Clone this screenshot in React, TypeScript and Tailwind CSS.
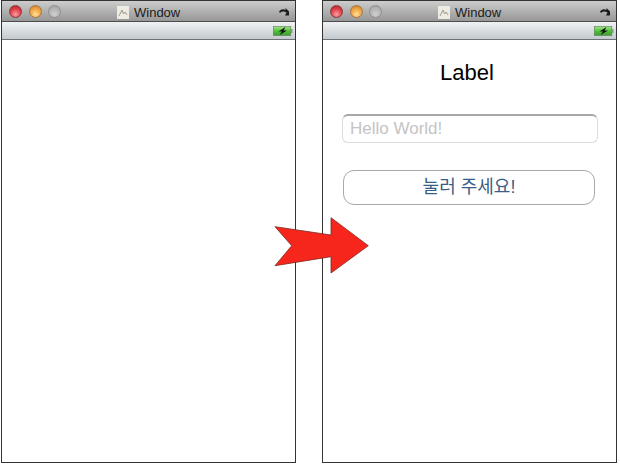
const font = { sans: "font-['Liberation_Sans','Noto_Sans_CJK_KR',sans-serif]" }

function TrafficLight({ color }: { color: string }) {
  const fills: Record<string, string> = {
    red: "bg-[radial-gradient(circle_at_50%_75%,#f7a0a2_0%,#e2444c_50%,#a8222a_100%)] border-[#8c3a3e]",
    yellow: "bg-[radial-gradient(circle_at_50%_75%,#fde09a_0%,#f2a848_50%,#c47a2c_100%)] border-[#a5793f]",
    gray: "bg-[radial-gradient(circle_at_50%_75%,#cfcfcf_0%,#b5b5b5_55%,#9c9c9c_100%)] border-[#8f8f8f]",
  }
  return <div className={`h-[13px] w-[13px] rounded-full border ${fills[color]}`} />
}

function TitleBar() {
  return (
    <div className="relative flex h-[21px] shrink-0 items-center border-b border-[#4c4c4c] bg-gradient-to-b from-[#cdcdcd] to-[#979797] pl-[7px]">
      <div className="flex gap-[6.5px]">
        <TrafficLight color="red" />
        <TrafficLight color="yellow" />
        <TrafficLight color="gray" />
      </div>
      <div className="absolute left-[115px] top-[5px] flex items-center gap-[5px]">
        <svg width="12" height="13" viewBox="0 0 12 13">
          <rect width="12" height="13" fill="#eeeae4" />
          <path d="M2 10 L5 4 L6.5 8 L8 6 L10 9" fill="none" stroke="#a39a8e" strokeWidth="1" />
        </svg>
        <span className={`${font.sans} text-[13px] leading-none text-[#1c1c1c]`}>Window</span>
      </div>
      <svg className="absolute right-[6px] top-[7px]" width="10" height="8" viewBox="0 0 10 8">
        <path d="M0 3.5 Q3 0 6.5 2 L6.5 0 L10 3.5 L10 7.5 L6 7.5 L7.5 4.5 Q3.5 2.5 1 5 Z" fill="#1c1c1c" />
      </svg>
    </div>
  )
}

function StatusBar() {
  return (
    <div className="flex h-[18px] shrink-0 items-center justify-end border-b border-[#6e7275] bg-gradient-to-b from-[#f0f3f4] to-[#c3c9cd] pr-[2px]">
      <svg width="20" height="10" viewBox="0 0 20 10">
        <defs>
          <linearGradient id="charge" x1="0" y1="0" x2="0" y2="1">
            <stop offset="0" stopColor="#a5e58a" />
            <stop offset="0.5" stopColor="#4fc23a" />
            <stop offset="1" stopColor="#3f9a30" />
          </linearGradient>
        </defs>
        <rect x="0.3" y="0.5" width="17.5" height="9" fill="url(#charge)" stroke="#5d7d55" strokeWidth="0.6" />
        <rect x="18" y="3" width="1.5" height="4" fill="#8a9a88" />
        <path d="M12.5 1 L5.5 5.5 L9 5.5 L6.5 9 L14 4.5 L10.5 4.5 Z" fill="#111" />
      </svg>
    </div>
  )
}

function Window({ children }: { children?: React.ReactNode }) {
  return (
    <div className="flex h-[463px] w-[295px] flex-col border border-[#333333] bg-white">
      <TitleBar />
      <StatusBar />
      {children}
    </div>
  )
}

export default function App() {
  return (
    <div className="relative h-[465px] w-[620px] overflow-hidden bg-white">
      <div className="flex gap-[26px] pl-[1px]">
        <Window />
        <Window>
          <div className={`flex flex-col ${font.sans}`}>
            <div className="ml-[-5px] mt-[20px] text-center text-[22px] leading-[26px] text-black">Label</div>
            <div className="ml-[19px] mt-[28px] flex h-[29px] w-[256px] items-center rounded-[6px] border border-[#dcdcdc] border-t-2 border-t-[#a8a8a8] pl-[7px] text-[17px] text-[#c4c4c4]">
              Hello World!
            </div>
            <button className="ml-[20px] mt-[27px] h-[35px] w-[252px] rounded-[11px] border border-[#a9a9a9] text-[18px] font-normal text-[#3a5d87]">
              눌러 주세요!
            </button>
          </div>
        </Window>
      </div>
      <svg className="absolute left-0 top-0" width="620" height="465" viewBox="0 0 620 465">
        <polygon
          points="275,226.7 331,235 331,217.7 368.3,245.7 331,273 331,256.7 275,265.7 291.7,245.7"
          fill="#f7261c"
          stroke="#7a2a22"
          strokeWidth="0.8"
        />
      </svg>
    </div>
  )
}
